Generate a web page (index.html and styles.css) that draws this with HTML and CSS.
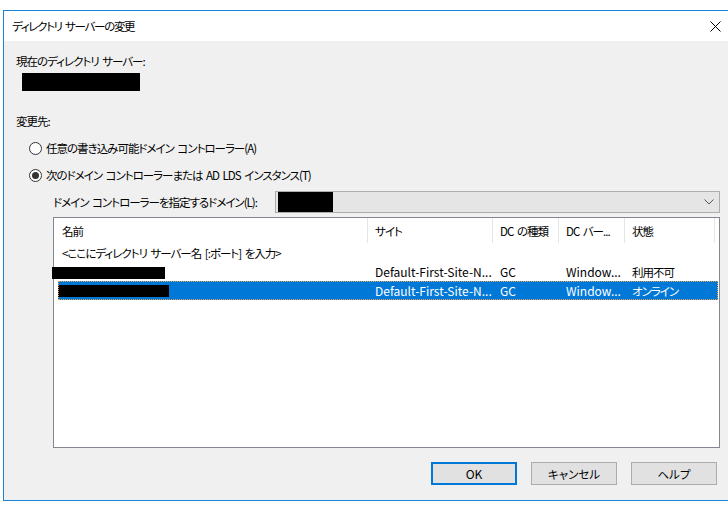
FILE: index.html
```html
<!DOCTYPE html>
<html lang="ja">
<head>
  <meta charset="UTF-8" />
  <title>ディレクトリ サーバーの変更</title>
  <link rel="stylesheet" href="styles.css">
</head>
<body>

<div class="dialog">
  <div class="titlebar">
    <span class="title">ディレクトリ サーバーの変更</span>
    <svg class="close" width="11" height="11" viewBox="0 0 11 11" aria-label="閉じる">
      <path d="M0.5 0.5 L10.5 10.5 M10.5 0.5 L0.5 10.5" stroke="#000" stroke-width="1" fill="none" />
    </svg>
  </div>

  <div class="content">
    <div class="label current">現在のディレクトリ サーバー:</div>
    <div class="redact redact-current"></div>

    <div class="label change">変更先:</div>

    <div class="radio-row first">
      <span class="radio"></span>
      <span>任意の書き込み可能ドメイン コントローラー(A)</span>
    </div>
    <div class="radio-row">
      <span class="radio checked"></span>
      <span>次のドメイン コントローラーまたは AD LDS インスタンス(T)</span>
    </div>

    <div class="domain-row">
      <span class="domain-label">ドメイン コントローラーを指定するドメイン(L):</span>
      <div class="combo">
        <div class="redact redact-combo"></div>
        <svg class="chevron" width="10" height="6" viewBox="0 0 10 6">
          <path d="M0.5 0.5 L5 5 L9.5 0.5" stroke="#555" stroke-width="1" fill="none" />
        </svg>
      </div>
    </div>

    <div class="listview">
      <div class="lv-row lv-header">
        <div class="col c1">名前</div>
        <div class="col c2">サイト</div>
        <div class="col c3">DC の種類</div>
        <div class="col c4">DC バー...</div>
        <div class="col c5">状態</div>
      </div>
      <div class="lv-row">
        <div class="col c1">&lt;ここにディレクトリ サーバー名 [:ポート] を入力&gt;</div>
      </div>
      <div class="lv-row">
        <div class="col c1"><div class="redact redact-row2"></div></div>
        <div class="col c2 latin">Default-First-Site-N...</div>
        <div class="col c3 latin">GC</div>
        <div class="col c4 latin">Window...</div>
        <div class="col c5">利用不可</div>
      </div>
      <div class="lv-row selected">
        <div class="col c1"><div class="redact redact-row3"></div></div>
        <div class="col c2 latin">Default-First-Site-N...</div>
        <div class="col c3 latin">GC</div>
        <div class="col c4 latin">Window...</div>
        <div class="col c5">オンライン</div>
      </div>
    </div>

    <div class="buttons">
      <button class="btn default">OK</button>
      <button class="btn">キャンセル</button>
      <button class="btn">ヘルプ</button>
    </div>
  </div>
</div>

</body>
</html>
```

FILE: styles.css
```css
* {
  margin: 0;
  padding: 0;
  box-sizing: border-box;
}
html, body {
  width: 728px;
  height: 507px;
  overflow: hidden;
  background: #fff;
  font-family: "Noto Sans CJK JP", "Noto Sans", sans-serif;
  font-size: 11.5px;
  line-height: 16px;
  color: #000;
  font-feature-settings: "palt";
  letter-spacing: -1px;
  word-spacing: 2px;
}
.dialog {
  margin: 10px 0 0 3px;
  width: 740px;
  height: 491px;
  border: 1px solid #1883d7;
  border-right: none;
  background: #f0f0f0;
  display: flex;
  flex-direction: column;
}
/* Title bar */
.titlebar {
  height: 30px;
  background: #fff;
  display: flex;
  align-items: center;
  justify-content: space-between;
  padding: 0 22px 0 8px;
  flex-shrink: 0;
}
.title {
  letter-spacing: -1.3px;
}
.close {
  display: block;
}
.content {
  padding: 0 23px 0 12px;
}
.label.current {
  margin-top: 12px;
}
.redact {
  background: #000;
}
.redact-current {
  margin: 4px 0 0 6px;
  width: 118px;
  height: 18px;
}
.label.change {
  margin-top: 22px;
}
/* Radio buttons */
.radio-row {
  display: flex;
  align-items: center;
  gap: 4px;
  margin: 11px 0 0 13px;
}
.radio {
  width: 13px;
  height: 13px;
  border: 1px solid #333;
  border-radius: 50%;
  background: #fff;
  display: flex;
  align-items: center;
  justify-content: center;
}
.radio.checked::after {
  content: "";
  width: 7px;
  height: 7px;
  border-radius: 50%;
  background: #333;
}
/* Domain combo */
.domain-row {
  display: flex;
  align-items: center;
  margin: 8px 0 0 37px;
}
.domain-label {
  width: 222px;
  white-space: nowrap;
  flex-shrink: 0;
}
.combo {
  flex: 1;
  height: 22px;
  background: #e5e5e5;
  border: 1px solid #adadad;
  display: flex;
  align-items: center;
  justify-content: space-between;
  padding-right: 5px;
}
.redact-combo {
  width: 55px;
  height: 20px;
  margin-left: 2px;
}
/* List view */
.listview {
  margin: 4px 0 0 37px;
  height: 231px;
  background: #fff;
  border: 1px solid #828790;
}
.lv-row {
  display: flex;
  height: 19px;
  align-items: center;
}
.lv-header {
  height: 25px;
  align-items: stretch;
}
.lv-header .col {
  display: flex;
  align-items: center;
  border-right: 1px solid #e5e5e5;
  padding-top: 1px;
}
.col {
  padding-left: 7px;
  white-space: nowrap;
  flex-shrink: 0;
}
.col.latin {
  font-size: 12px;
  letter-spacing: 0;
  word-spacing: 0;
}
.c1 { width: 314px; padding-left: 8px; }
.c2 { width: 125px; }
.c3 { width: 66px; }
.c4 { width: 66px; }
.c5 { width: 90px; }
.redact-row2 {
  width: 113px;
  height: 12px;
  margin: 3px 0 0 -10px;
}
.lv-row.selected {
  margin: 0 1px 0 4px;
  background: #0078d7;
  color: #fff;
  outline: 1px dotted #e3a35a;
  outline-offset: -1px;
}
.lv-row.selected .c1 {
  width: 310px;
  padding-left: 0;
}
.redact-row3 {
  width: 111px;
  height: 12px;
}
/* Buttons */
.buttons {
  display: flex;
  justify-content: flex-end;
  gap: 14px;
  margin-top: 14px;
  padding-right: 3px;
}
.btn {
  width: 86px;
  height: 23px;
  font: inherit;
  background: #e1e1e1;
  border: 1px solid #adadad;
  color: #000;
}
.btn.default {
  border: 2px solid #0078d7;
  font-size: 12px;
  letter-spacing: 0;
}
```
